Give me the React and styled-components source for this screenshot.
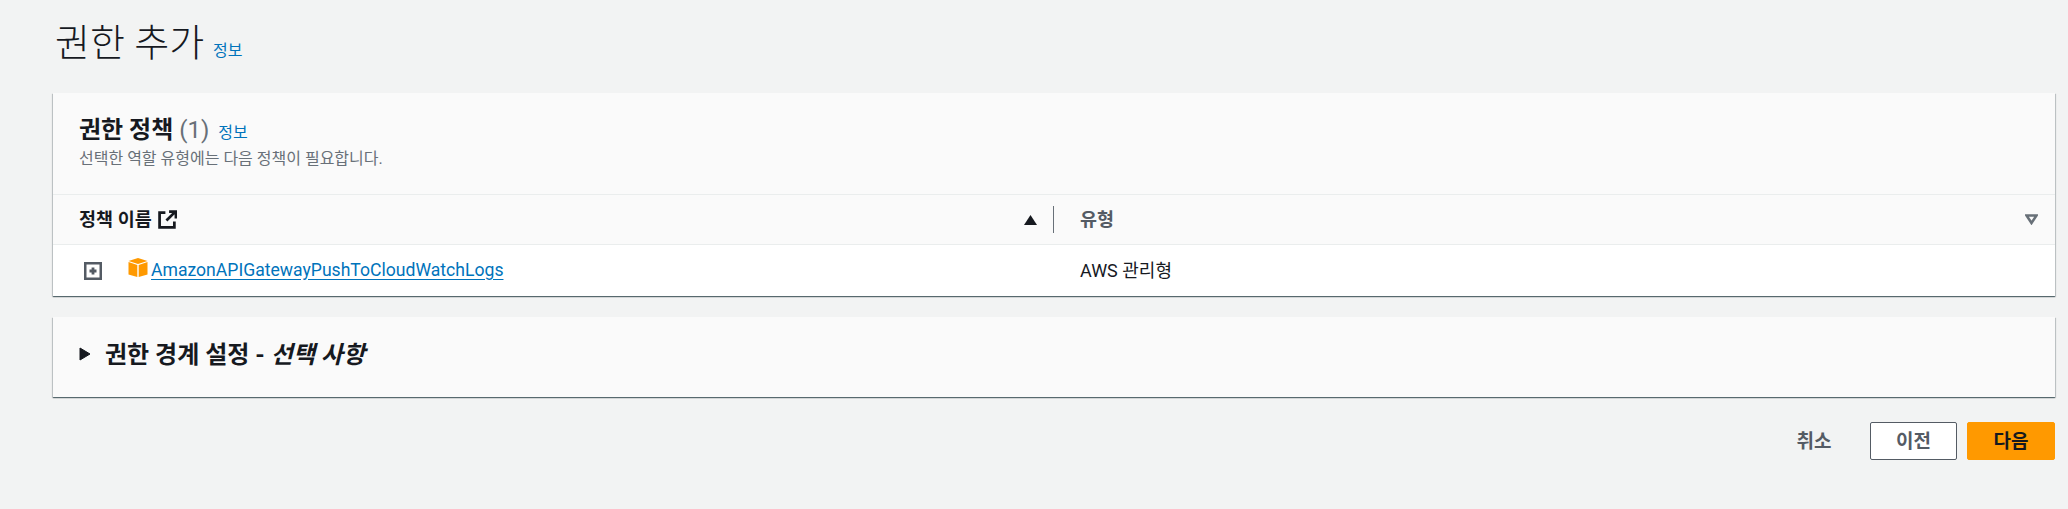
import React from "react";
import styled, { createGlobalStyle } from "styled-components";

const FONT = `Roboto, "Noto Sans CJK KR", sans-serif`;

const GlobalStyle = createGlobalStyle`
  html, body {
    margin: 0;
    background: #f2f3f3;
  }
  body {
    font-family: ${FONT};
    color: #16191f;
  }
`;

const Page = styled.div`
  width: 2068px;
  height: 509px;
  box-sizing: border-box;
  padding: 0 13px 0 53px;
  overflow: hidden;
`;

const TitleRow = styled.div`
  height: 93px;
  box-sizing: border-box;
  padding: 18px 0 0 2px;
  display: flex;
  align-items: baseline;
  gap: 9px;
`;

const Title = styled.h1`
  margin: 0;
  font-size: 38px;
  line-height: 50px;
  font-weight: 300;
`;

const InfoLink = styled.a`
  font-size: 16px;
  color: #0073bb;
`;

const Card = styled.section`
  background: #fff;
  box-shadow: 0 1px 1px 0 rgba(0, 28, 36, 0.5), 1px 1px 1px 0 rgba(0, 28, 36, 0.15),
    -1px 1px 1px 0 rgba(0, 28, 36, 0.15);
  margin-bottom: 21px;
`;

const CardHeader = styled.header`
  height: 101px;
  box-sizing: border-box;
  background: #fafafa;
  padding: 21px 26px 0;
`;

const HeadingRow = styled.div`
  display: flex;
  align-items: baseline;
  gap: 9px;
  margin-bottom: 2px;
`;

const Heading = styled.h2`
  margin: 0;
  font-size: 24px;
  line-height: 32px;
  font-weight: 700;
`;

const Count = styled.span`
  color: #687078;
  font-weight: 400;
`;

const Description = styled.p`
  margin: 0;
  font-size: 16px;
  line-height: 22px;
  color: #687078;
`;

const TableHead = styled.div`
  display: grid;
  grid-template-columns: 1001px 1fr;
  height: 51px;
  box-sizing: border-box;
  background: #fafafa;
  border-top: 1px solid #eaeded;
  border-bottom: 1px solid #eaeded;
`;

const HeadCell = styled.div`
  display: flex;
  align-items: center;
  justify-content: space-between;
  padding: ${(p) => (p.$last ? "0 17px 0 26px" : "0 0 0 26px")};
  font-size: 18.5px;
  font-weight: 700;
  color: ${(p) => (p.$muted ? "#545b64" : "#16191f")};
`;

const HeadLabel = styled.span`
  display: flex;
  align-items: center;
  gap: 6px;
  padding-bottom: 3px;
`;

const HeadIconSlot = styled.span`
  display: flex;
  margin-top: 3px;
`;

const HeadText = styled.span`
  padding-bottom: 3px;
`;

const SortGroup = styled.span`
  display: flex;
  align-items: center;
  gap: 16px;
`;

const Divider = styled.span`
  width: 1px;
  height: 27px;
  background: #687078;
`;

const Row = styled.div`
  display: grid;
  grid-template-columns: 1001px 1fr;
  height: 51px;
  align-items: center;
`;

const NameCell = styled.div`
  display: flex;
  align-items: center;
  padding-left: 31px;
`;

const ExpandSlot = styled.span`
  display: flex;
  margin-right: 26px;
`;

const CubeSlot = styled.span`
  display: flex;
  margin-top: -5px;
`;

const PolicyLink = styled.a`
  margin-left: 3px;
  margin-top: -2px;
  font-size: 17.6px;
  color: #0073bb;
  text-decoration: underline;
  text-underline-offset: 3px;
`;

const TypeCell = styled.div`
  padding-left: 26px;
  font-size: 18px;
  margin-top: -3px;
`;

const SectionTitle = styled.div`
  height: 80px;
  box-sizing: border-box;
  padding: 0 0 10px 26px;
  display: flex;
  align-items: center;
  gap: 14px;
  font-size: 24px;
  font-weight: 700;
  background: #fafafa;

  em {
    font-style: italic;
  }
`;

const CaretSlot = styled.span`
  display: flex;
  margin-top: 3px;
`;

const Actions = styled.div`
  display: flex;
  justify-content: flex-end;
  align-items: center;
  gap: 10px;
  margin-top: 25px;
`;

const Button = styled.button`
  height: 38px;
  width: ${(p) => p.$width}px;
  box-sizing: border-box;
  border-radius: 2px;
  border: 1px solid ${(p) => (p.$variant === "primary" ? "#ff9900" : p.$variant === "plain" ? "transparent" : "#545b64")};
  background: ${(p) => (p.$variant === "primary" ? "#ff9900" : p.$variant === "plain" ? "transparent" : "#fff")};
  color: ${(p) => (p.$variant === "primary" ? "#16191f" : "#545b64")};
  font: 700 19px ${FONT};
  padding: 0 0 3px;
`;

function ExternalIcon() {
  return (
    <svg width="19" height="19" viewBox="0 0 18 18" fill="none" stroke="#16191f" strokeWidth="2.6">
      <path d="M7 2.5H1.5v14h14V11" />
      <path d="M8 10l8-8M10.5 1.5h6.5V8" />
    </svg>
  );
}

function SortUp() {
  return (
    <svg width="13" height="10" viewBox="0 0 13 10">
      <path d="M6.5 0L13 10H0z" fill="#16191f" />
    </svg>
  );
}

function SortDown() {
  return (
    <svg width="13" height="11" viewBox="0 0 13 11" fill="none" stroke="#687078" strokeWidth="2.6">
      <path d="M1.5 1.5h10L6.5 9z" />
    </svg>
  );
}

function ExpandIcon() {
  return (
    <svg width="18" height="18" viewBox="0 0 18 18" fill="none" stroke="#545b64">
      <rect x="1.2" y="1.2" width="15.6" height="15.6" strokeWidth="2.6" />
      <path d="M5.5 9h7M9 5.5v7" strokeWidth="2.8" />
    </svg>
  );
}

function CubeIcon() {
  return (
    <svg width="20" height="20" viewBox="0 0 20 20">
      <path d="M10 0l9.5 3L10 6 .5 3z" fill="#ff9900" />
      <path d="M.5 4l8.8 3v12L.5 16.5z" fill="#ff9900" />
      <path d="M19.5 4l-8.8 3v12l8.8-2.5z" fill="#ff9900" />
    </svg>
  );
}

function CaretRight() {
  return (
    <svg width="12" height="14" viewBox="0 0 12 14">
      <path d="M1 1l10 6-10 6z" fill="#16191f" stroke="#16191f" strokeLinejoin="round" />
    </svg>
  );
}

export default function App() {
  return (
    <Page>
      <GlobalStyle />
      <TitleRow>
        <Title>권한 추가</Title>
        <InfoLink>정보</InfoLink>
      </TitleRow>
      <Card>
        <CardHeader>
          <HeadingRow>
            <Heading>
              권한 정책 <Count>(1)</Count>
            </Heading>
            <InfoLink>정보</InfoLink>
          </HeadingRow>
          <Description>선택한 역할 유형에는 다음 정책이 필요합니다.</Description>
        </CardHeader>
        <TableHead>
          <HeadCell>
            <HeadLabel>
              정책 이름
              <HeadIconSlot>
                <ExternalIcon />
              </HeadIconSlot>
            </HeadLabel>
            <SortGroup>
              <SortUp />
              <Divider />
            </SortGroup>
          </HeadCell>
          <HeadCell $last $muted>
            <HeadText>유형</HeadText>
            <SortDown />
          </HeadCell>
        </TableHead>
        <Row>
          <NameCell>
            <ExpandSlot>
              <ExpandIcon />
            </ExpandSlot>
            <CubeSlot>
              <CubeIcon />
            </CubeSlot>
            <PolicyLink>AmazonAPIGatewayPushToCloudWatchLogs</PolicyLink>
          </NameCell>
          <TypeCell>AWS 관리형</TypeCell>
        </Row>
      </Card>
      <Card>
        <SectionTitle>
          <CaretSlot>
            <CaretRight />
          </CaretSlot>
          <span>
            권한 경계 설정 - <em>선택 사항</em>
          </span>
        </SectionTitle>
      </Card>
      <Actions>
        <Button $variant="plain" $width={92}>취소</Button>
        <Button $width={87}>이전</Button>
        <Button $variant="primary" $width={88}>다음</Button>
      </Actions>
    </Page>
  );
}
